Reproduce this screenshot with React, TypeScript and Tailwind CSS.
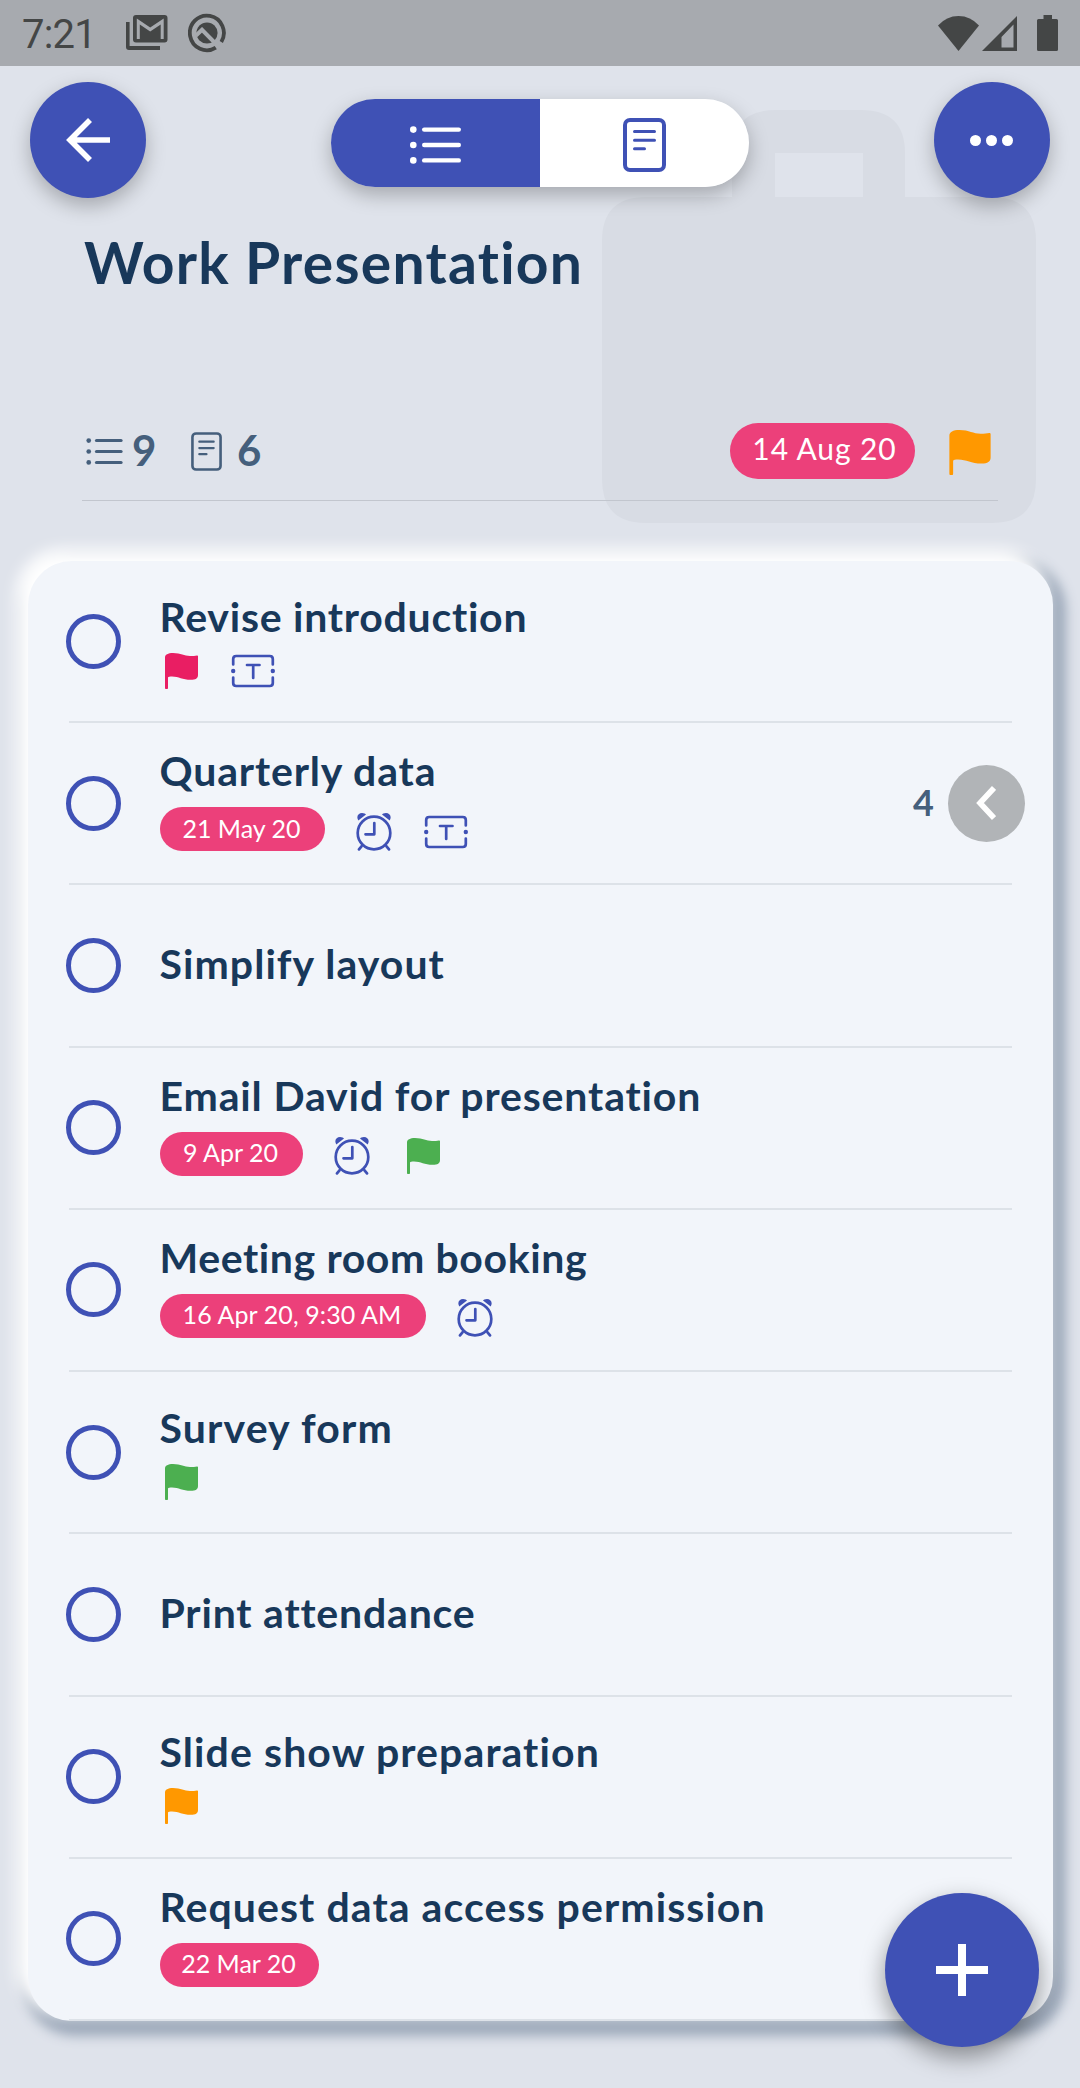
import React from 'react';

type IconKind = 'flag' | 'text' | 'alarm';

interface Task {
  title: string;
  titleClass: string;
  date?: string;
  dateClass?: string;
  icons: { kind: IconKind; color?: string }[];
  count?: number;
}

const tasks: Task[] = [
  {
    title: 'Revise introduction',
    titleClass: 'tracking-[0.75px]',
    icons: [{ kind: 'flag', color: 'text-[#e91e63]' }, { kind: 'text' }],
  },
  {
    title: 'Quarterly data',
    titleClass: 'tracking-[0.85px]',
    date: '21 May 20',
    dateClass: 'w-[165px]',
    icons: [{ kind: 'alarm' }, { kind: 'text' }],
    count: 4,
  },
  { title: 'Simplify layout', titleClass: 'tracking-[1.05px]', icons: [] },
  {
    title: 'Email David for presentation',
    titleClass: 'tracking-[0.85px]',
    date: '9 Apr 20',
    dateClass: 'w-[143px]',
    icons: [{ kind: 'alarm' }, { kind: 'flag', color: 'text-[#4caf50]' }],
  },
  {
    title: 'Meeting room booking',
    titleClass: 'tracking-[0.6px]',
    date: '16 Apr 20, 9:30 AM',
    dateClass: 'w-[266px] tracking-[0.1px]',
    icons: [{ kind: 'alarm' }],
  },
  {
    title: 'Survey form',
    titleClass: 'tracking-[1.15px]',
    icons: [{ kind: 'flag', color: 'text-[#4caf50]' }],
  },
  { title: 'Print attendance', titleClass: 'tracking-[0.8px]', icons: [] },
  {
    title: 'Slide show preparation',
    titleClass: 'tracking-[1.1px]',
    icons: [{ kind: 'flag', color: 'text-[#ff9800]' }],
  },
  {
    title: 'Request data access permission',
    titleClass: 'tracking-[1.07px]',
    date: '22 Mar 20',
    dateClass: 'w-[159px]',
    icons: [],
  },
];

const FlagIcon: React.FC<{ className?: string }> = ({ className }) => (
  <svg viewBox="0 0 33 36" className={className} fill="currentColor">
    <path d="M0 4.5C0 1.5 3 0 8 0c8 0 11 3 17 3 3 0 5-.4 7-.6.6 0 1 .3 1 1V22c0 3.400-2.500 4.800-7 4.800-9 0-12-3.300-19-3.300-2 0-4 .4-4 1V34.800a1.500 1.500 0 0 1-3 0z" />
  </svg>
);

const TextIcon = () => (
  <svg
    viewBox="0 0 44 34"
    className="h-[34px] w-11"
    fill="none"
    stroke="currentColor"
    strokeWidth="2.700"
    strokeLinecap="round"
    strokeLinejoin="round"
  >
    <path d="M2.200 10.500V5Q2.200 2 5.200 2H38.800Q41.800 2 41.800 5V10.500M2.200 23.500V29Q2.200 32 5.200 32H38.800Q41.800 32 41.800 29V23.500" />
    <path d="M16 11H28.500M22.200 11V24" />
    <circle cx="2.200" cy="17" r="2.200" fill="currentColor" stroke="none" />
    <circle cx="41.800" cy="17" r="2.200" fill="currentColor" stroke="none" />
  </svg>
);

const AlarmIcon = () => (
  <svg
    viewBox="0 0 36 38"
    className="h-[38px] w-9"
    fill="none"
    stroke="currentColor"
    strokeWidth="2.700"
    strokeLinecap="round"
  >
    <circle cx="18" cy="20" r="16.300" />
    <path d="M18.300 10V21.300H9.500" strokeLinejoin="round" />
    <path d="M5.500 33.300L3 36.400M30.500 33.300L33 36.400" />
    <path
      d="M2.300 7.500C-.2 3 2.600 0 6 0c2 0 3.600.8 4 1.600zM33.700 7.500C36.200 3 33.400 0 30 0c-2 0-3.600.8-4 1.600z"
      fill="currentColor"
      stroke="none"
    />
  </svg>
);

const ListIcon: React.FC<{ className?: string }> = ({ className }) => (
  <svg viewBox="0 0 51 38" className={className} fill="currentColor">
    <circle cx="3.300" cy="3.600" r="3.300" />
    <circle cx="3.300" cy="19" r="3.300" />
    <circle cx="3.300" cy="34.400" r="3.300" />
    <rect x="12" y="1.400" width="39" height="4.400" rx="2.200" />
    <rect x="12" y="16.800" width="39" height="4.400" rx="2.200" />
    <rect x="12" y="32.200" width="39" height="4.400" rx="2.200" />
  </svg>
);

const NoteIcon: React.FC<{ className?: string; strokeWidth: number }> = ({ className, strokeWidth }) => (
  <svg
    viewBox="0 0 43 54"
    className={className}
    fill="none"
    stroke="currentColor"
    strokeLinecap="round"
  >
    <rect x="2" y="2" width="39" height="50" rx="5" strokeWidth={strokeWidth} />
    <path d="M11.500 13.400H31.500M11.500 22.300H31.500M11.500 30.700H21.500" strokeWidth="3" />
  </svg>
);

const StatusBar = () => (
  <div className="flex h-[66px] items-center bg-[#a7aaaf] pl-[22px] text-[#444646]">
    <span className="w-[104px] pt-[3px] font-['Roboto'] text-[40px] leading-none tracking-[-0.8px]">
      7:21
    </span>
    <svg viewBox="0 0 42 36" className="h-9 w-[42px]" fill="currentColor">
      <path d="M0 7H3.600V31H34V35H3Q0 35 0 32z" />
      <path
        fillRule="evenodd"
        d="M10 0H38.500Q41.500 0 41.500 3V24.500Q41.500 27.500 38.500 27.500H10Q7 27.500 7 24.500V3Q7 0 10 0zM10.800 3.600V24H13.800V9.500L24.200 16.500 34.700 9.500V24H37.700V3.600L24.200 12.500z"
      />
    </svg>
    <svg viewBox="0 0 38 40" className="ml-5 h-10 w-[38px]" fill="none">
      <path d="M27.800 34.600A17 17.300 0 1 1 33.300 29" stroke="currentColor" strokeWidth="3.800" />
      <circle cx="19" cy="20" r="10.600" fill="currentColor" />
      <path d="M8 22.500L14 16.800 32 35" stroke="#a7aaaf" strokeWidth="4" />
      <path d="M9.500 20.500L14 16 18 20" stroke="#a7aaaf" strokeWidth="2" />
    </svg>
    <svg viewBox="0 0 41 35" className="ml-auto h-[35px] w-[41px]" fill="currentColor">
      <path d="M0 9.500Q8.500 0 20.500 0T41 9.500L20.500 35z" />
    </svg>
    <svg viewBox="0 0 35 35" className="ml-[3px] h-[35px] w-[35px]" fill="currentColor">
      <path fillRule="evenodd" d="M35 0V35H0zM31.500 8.500L19.500 21V31.500H31.500z" />
    </svg>
    <svg viewBox="0 0 21 36" className="mr-[22px] ml-5 h-9 w-[21px]" fill="currentColor">
      <path d="M6.500 0H15V4H19.500Q21 4 21 5.500V34.500Q21 36 19.500 36H1.500Q0 36 0 34.500V5.500Q0 4 1.500 4H6.500z" />
    </svg>
  </div>
);

const Header = () => (
  <header className="relative h-[495px]">
    {/* Briefcase watermark behind the header content */}
    <svg
      viewBox="0 0 434 413"
      className="absolute top-[44px] left-[602px] h-[413px] w-[434px] text-[#d8dce4]"
      fill="currentColor"
    >
      <path
        fillRule="evenodd"
        d="M44 87H130V43Q130 0 174 0H259Q303 0 303 43V87H390Q434 87 434 131V369Q434 413 390 413H44Q0 413 0 369V131Q0 87 44 87zM173 43V87H261V43z"
      />
    </svg>

    <div className="relative flex items-start justify-between px-[30px] pt-4">
      <button className="flex size-[116px] items-center justify-center rounded-full bg-[#3f51b5] shadow-[0_8px_20px_rgba(0,0,0,0.26)]">
        <svg viewBox="0 0 44 44" className="size-11" fill="none" stroke="#fff" strokeWidth="5.600">
          <path d="M44 22H5M24 2L4 22L24 42" />
        </svg>
      </button>
      <div className="mt-[17px] flex h-[88px] w-[418px] overflow-hidden rounded-full shadow-[0_8px_20px_rgba(0,0,0,0.26)]">
        <button className="flex w-1/2 items-center justify-center bg-[#3f51b5] pt-1 text-white">
          <ListIcon className="h-[38px] w-[51px]" />
        </button>
        <button className="flex w-1/2 items-center justify-center bg-white pt-[3px] text-[#3f51b5]">
          <NoteIcon className="h-[54px] w-[43px]" strokeWidth={4} />
        </button>
      </div>
      <button className="flex size-[116px] items-center justify-center gap-[5px] rounded-full bg-[#3f51b5] pr-px shadow-[0_8px_20px_rgba(0,0,0,0.26)]">
        <span className="size-[11px] rounded-full bg-white" />
        <span className="size-[11px] rounded-full bg-white" />
        <span className="size-[11px] rounded-full bg-white" />
      </button>
    </div>

    <div className="relative mr-[82px] ml-[82px]">
      <h1 className="mt-[29px] h-[196px] pl-0.5 text-[57px] leading-[70px] font-bold tracking-[1.25px] text-[#18385a]">
        Work Presentation
      </h1>
      <div className="flex h-[78px] items-start border-b border-[#c2c6ce] text-[#455f7c]">
        <div className="flex h-[56px] items-center">
          <ListIcon className="ml-1 h-[27px] w-[37px]" />
          <span className="ml-[9px] w-[59px] pb-0.5 text-[42px] leading-none font-bold">9</span>
          <NoteIcon className="h-[39px] w-[31px]" strokeWidth={3.6} />
          <span className="ml-[15px] pb-0.5 text-[42px] leading-none font-bold">6</span>
        </div>
        <div className="ml-auto flex h-[56px] w-[185px] items-center justify-center rounded-full bg-[#ec407a] text-[30px] leading-none tracking-[0.9px] text-white">
          <span className="pb-1.5 pl-1 whitespace-nowrap">14 Aug 20</span>
        </div>
        <FlagIcon className="mt-[7px] mr-[7px] ml-[34px] h-[45px] w-[42px] text-[#ff9800]" />
      </div>
    </div>
  </header>
);

const TaskRow: React.FC<{ task: Task }> = ({ task }) => {
  const hasMeta = Boolean(task.date) || task.icons.length > 0;

  return (
    <li className="relative flex flex-1 items-center pr-[28px] pb-0.5 pl-[38px]">
      <span className="size-[55px] shrink-0 rounded-full border-[5.500px] border-[#3f51b5]" />
      <div
        className={`ml-[38.500px] flex flex-col ${task.date ? 'pb-3' : hasMeta ? 'pb-[5px]' : 'pb-[3px]'}`}
      >
        <span
          className={`text-[41px] leading-[56px] font-bold whitespace-nowrap text-[#18385a] ${task.titleClass}`}
        >
          {task.title}
        </span>
        {hasMeta && (
          <div className="mt-2 flex items-center gap-[27.500px]">
            {task.date && (
              <span
                className={`flex h-11 items-center justify-center rounded-full bg-[#ec407a] pr-px pb-0.5 text-[25px] leading-none whitespace-nowrap text-white ${task.dateClass}`}
              >
                {task.date}
              </span>
            )}
            {task.icons.map((icon) => (
              <span
                key={icon.kind}
                className={`flex w-11 justify-center ${task.date ? 'pt-[5px]' : ''} ${icon.color ?? 'text-[#3f51b5]'}`}
              >
                {icon.kind === 'flag' && <FlagIcon className="h-9 w-[33px]" />}
                {icon.kind === 'text' && <TextIcon />}
                {icon.kind === 'alarm' && <AlarmIcon />}
              </span>
            ))}
          </div>
        )}
      </div>
      {task.count !== undefined && (
        <div className="ml-auto flex items-center">
          <span className="pb-0.5 text-[36px] leading-none font-bold text-[#455f7c]">{task.count}</span>
          <button className="ml-[14px] flex size-[77px] items-center justify-center rounded-full bg-[#b1b4b7] pr-0.5">
            <svg viewBox="0 0 20 34" className="h-[34px] w-5" fill="none" stroke="#fff" strokeWidth="5.600">
              <path d="M18 2L4 17L18 32" />
            </svg>
          </button>
        </div>
      )}
      <span className="absolute right-[41px] bottom-0 left-[41px] h-0.5 bg-[#dde2e8]" />
    </li>
  );
};

const App: React.FC = () => {
  return (
    <div className="relative flex h-[2088px] w-[1080px] flex-col overflow-hidden bg-[#dfe3eb] font-['Lato',sans-serif]">
      <StatusBar />
      <Header />
      <ul className="mr-[27px] ml-[28px] flex h-[1460px] flex-col rounded-[44px] bg-[#f2f5fa] shadow-[-9px_-9px_15px_3px_#fff,4px_6px_12px_9px_#9eaabb]">
        {tasks.map((task) => (
          <TaskRow key={task.title} task={task} />
        ))}
      </ul>
      <button className="absolute top-[1893px] left-[885px] flex size-[154px] items-center justify-center rounded-full bg-[#3f51b5] shadow-[0_10px_24px_rgba(0,0,0,0.4)]">
        <svg viewBox="0 0 52 52" className="size-[52px]" fill="none" stroke="#fff" strokeWidth="8">
          <path d="M26 0V52M0 26H52" />
        </svg>
      </button>
    </div>
  );
};

export default App;
